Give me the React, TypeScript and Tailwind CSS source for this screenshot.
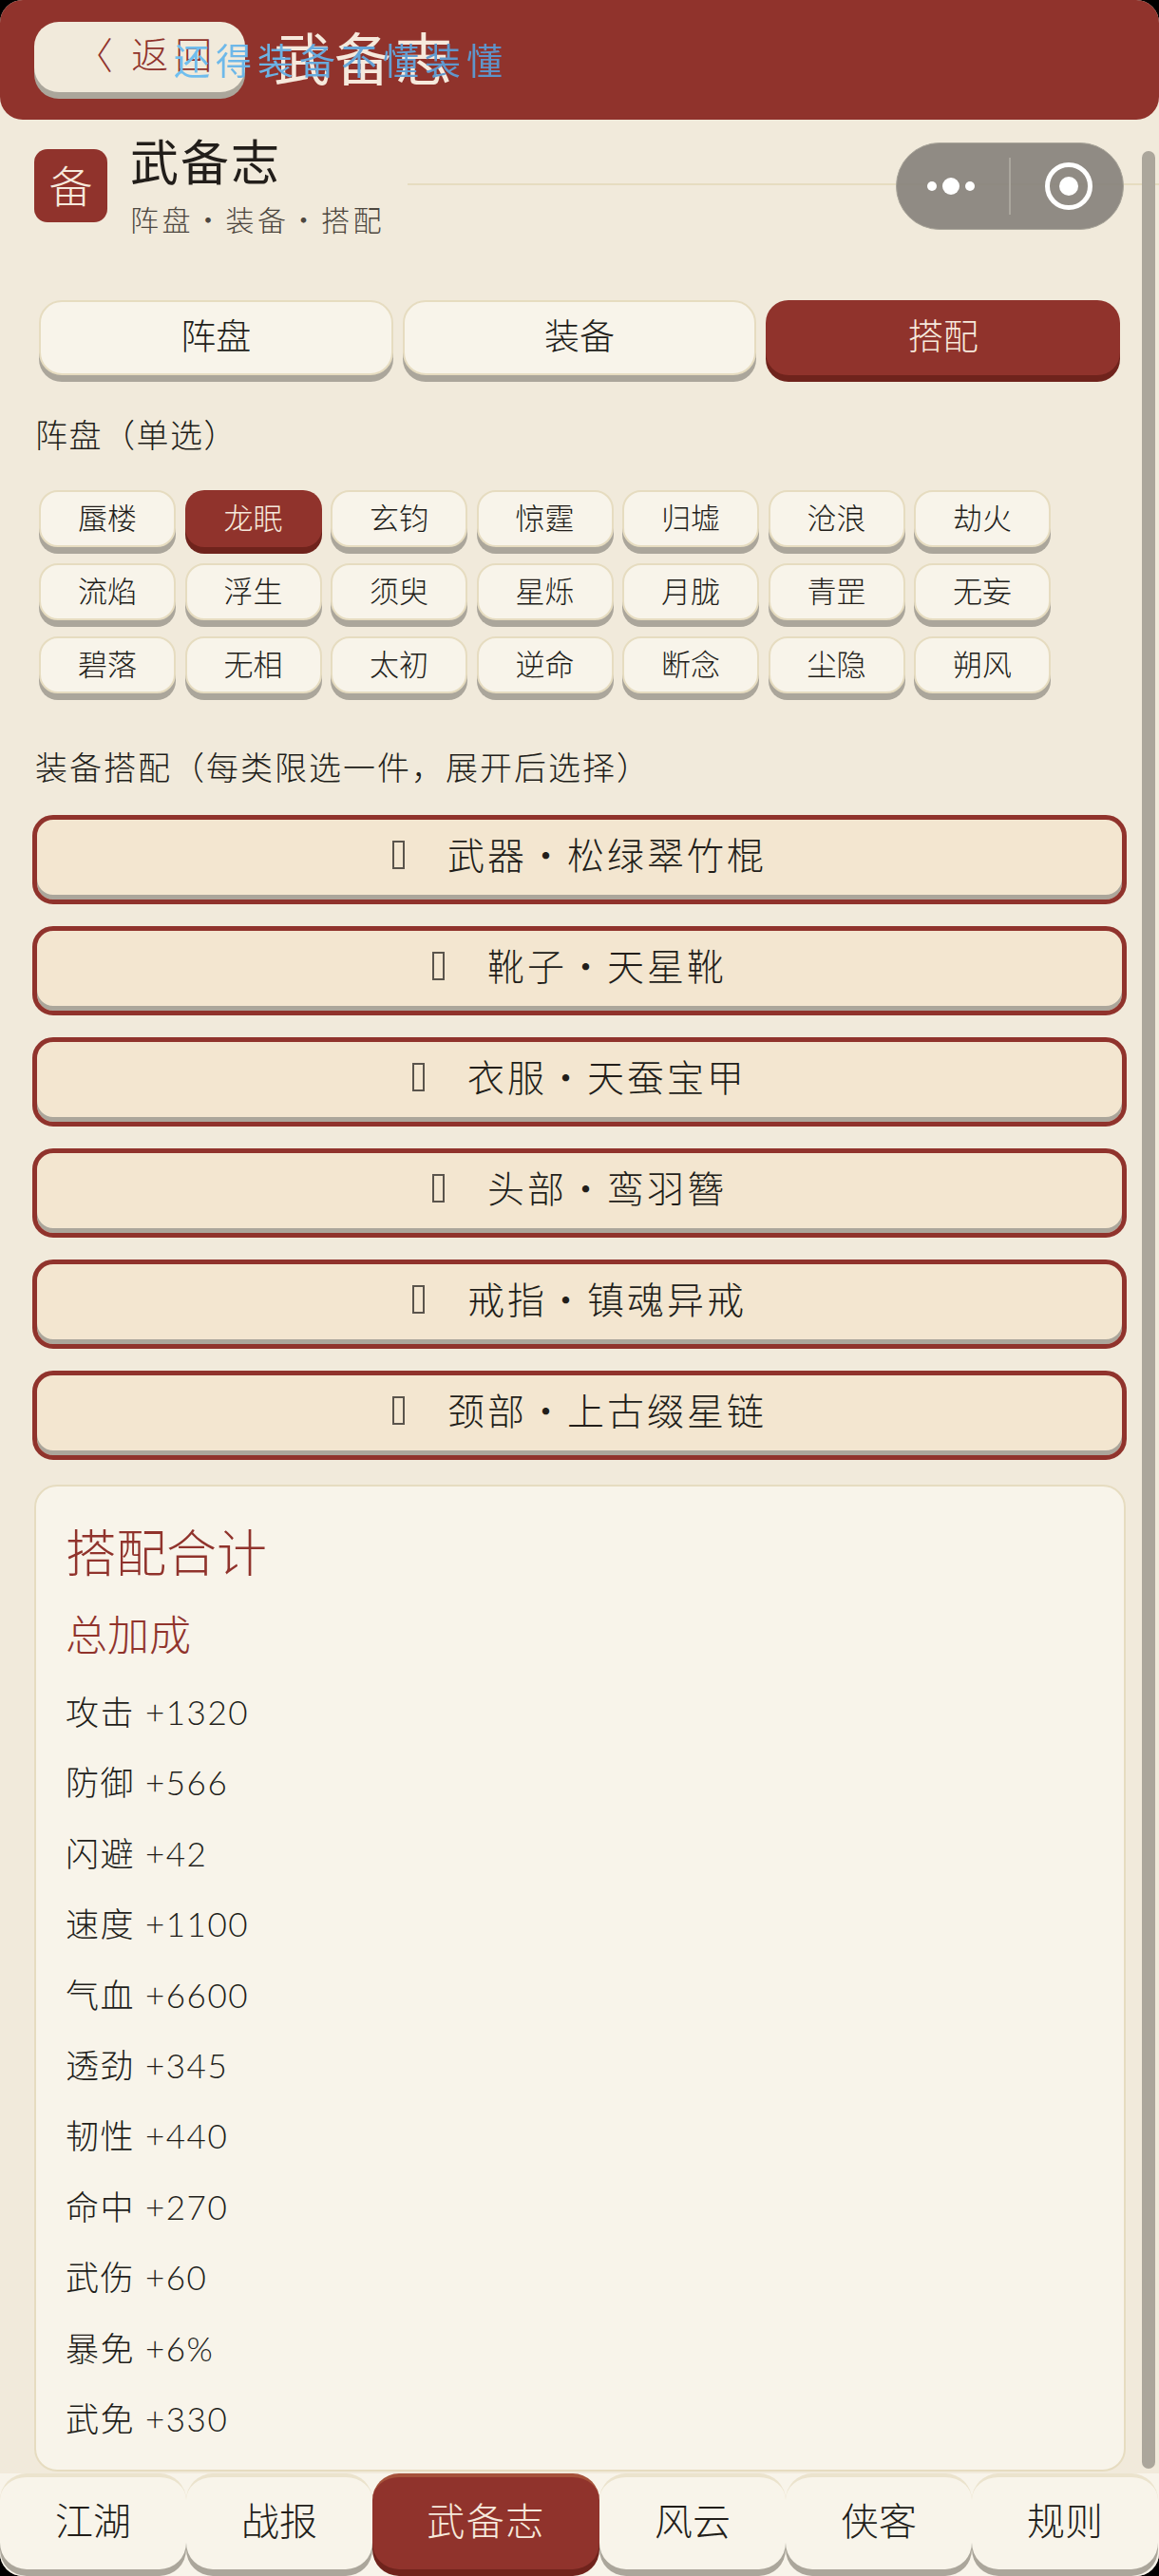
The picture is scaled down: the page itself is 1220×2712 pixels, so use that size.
const chips = [
  ["蜃楼", "龙眠", "玄钧", "惊霆", "归墟", "沧浪", "劫火"],
  ["流焰", "浮生", "须臾", "星烁", "月胧", "青罡", "无妄"],
  ["碧落", "无相", "太初", "逆命", "断念", "尘隐", "朔风"],
];
const gears = ["武器・松绿翠竹棍", "靴子・天星靴", "衣服・天蚕宝甲", "头部・鸾羽簪", "戒指・镇魂异戒", "颈部・上古缀星链"];
const stats = ["攻击 +1320", "防御 +566", "闪避 +42", "速度 +1100", "气血 +6600", "透劲 +345", "韧性 +440", "命中 +270", "武伤 +60", "暴免 +6%", "武免 +330"];
const nav = ["江湖", "战报", "武备志", "风云", "侠客", "规则"];

export default function App() {
  return (
    <div className="relative h-[2712px] w-[1220px] overflow-hidden bg-black font-['Lato','Noto_Sans_CJK_SC',sans-serif] font-light text-[#221e1a]">
      <div className="flex h-full flex-col overflow-hidden rounded-[24px] bg-[#f1eadb]">
        <header className="relative flex h-[126px] shrink-0 items-start rounded-b-[24px] bg-[#90332c] pl-[36px] pt-[23px]">
          <div className="flex h-[74px] w-[222px] items-center justify-center rounded-[26px] bg-[#f1eadb] pb-[6px] pl-[16px] text-[39px] tracking-[7px] text-[#90332c] shadow-[0_7px_0_#aba69b] [word-spacing:-5px]">
            〈 返回
          </div>
          <div className="absolute left-[288px] top-[19px] text-[60px] font-normal leading-[86px] tracking-[4px] text-[#f6e9dc]">武备志</div>
          <div className="absolute left-[183px] top-[35px] bg-gradient-to-r from-[#71c0f0] to-[#5d90c6] bg-clip-text text-[38px] font-normal leading-[56px] tracking-[6px] text-transparent">
            还得装备不懂装懂
          </div>
        </header>

        <div className="relative min-h-0 flex-1 overflow-hidden">
          <div className="relative flex h-[126px] items-start pl-[36px] pt-[31px]">
            <div className="flex h-[77px] w-[77px] items-center justify-center rounded-[14px] bg-[#90332c] text-[46px] text-[#f6e9dc]">备</div>
            <div className="-mt-[17px] ml-[24px]">
              <div className="text-[51px] font-normal leading-[62px] tracking-[2px]">武备志</div>
              <div className="mt-[9px] text-[30px] leading-[40px] tracking-[3.5px] text-[#4d473f]">阵盘・装备・搭配</div>
            </div>
            <div className="ml-[24px] mt-[36px] h-[2px] flex-1 bg-[#e6dcc0]" />
          </div>

          <div className="mt-[64px] flex gap-[10px] pl-[41px] pr-[41px]">
            {["阵盘", "装备", "搭配"].map((t, i) => (
              <div
                key={t}
                className={
                  i === 2
                    ? "flex h-[79px] w-[373px] items-center justify-center rounded-[24px] bg-[#90332c] pb-[4px] text-[37px] text-[#f6e9dc] shadow-[0_7px_0_#6f231c]"
                    : "flex h-[79px] w-[373px] items-center justify-center rounded-[24px] border-2 border-[#e6dcc0] bg-[#f8f4ea] pb-[4px] text-[37px] shadow-[0_7px_0_#aba69b]"
                }
              >
                {t}
              </div>
            ))}
          </div>

          <div className="mt-[39px] pl-[37px] text-[34px] leading-[48px] tracking-[1.5px]">阵盘（单选）</div>

          <div className="mt-[34px] flex flex-col gap-[17px] pl-[41px]">
            {chips.map((row, r) => (
              <div key={r} className="flex gap-[9.5px]">
                {row.map((c) => (
                  <div
                    key={c}
                    className={
                      c === "龙眠"
                        ? "flex h-[60px] w-[144px] items-center justify-center rounded-[20px] bg-[#90332c] pb-[2px] text-[31px] text-[#f6e9dc] shadow-[0_7px_0_#6f231c]"
                        : "flex h-[60px] w-[144px] items-center justify-center rounded-[20px] border-2 border-[#e6dcc0] bg-[#f8f4ea] pb-[2px] text-[31px] shadow-[0_7px_0_#aba69b]"
                    }
                  >
                    {c}
                  </div>
                ))}
              </div>
            ))}
          </div>

          <div className="mt-[54px] pl-[37px] text-[34px] leading-[48px] tracking-[2px]">装备搭配（每类限选一件，展开后选择）</div>

          <div className="mt-[26px] flex flex-col gap-[23px] pl-[34px] pr-[34px]">
            {gears.map((g) => (
              <div
                key={g}
                className="flex h-[94px] items-center justify-center rounded-[22px] border-[5px] border-[#90332c] bg-[#f3e6d0] pb-[10px] text-[39px] tracking-[3px] shadow-[inset_0_-5px_0_#aba69b]"
              >
                <span className="mr-[45px] h-[30px] w-[13px] border-2 border-[#5a544c]" />
                {g}
              </div>
            ))}
          </div>

          <section className="ml-[36px] mt-[26px] h-[1039px] w-[1149px] rounded-[24px] border-2 border-[#e6dcc0] bg-[#f8f4ea] pl-[31px] pt-[32px]">
            <div className="text-[53px] leading-[76px] text-[#90332c]">搭配合计</div>
            <div className="mt-[17px] text-[44px] leading-[62px] text-[#90332c]">总加成</div>
            <div className="mt-[13px] flex flex-col">
              {stats.map((s) => (
                <div key={s} className="h-[74.4px] text-[35px] leading-[74px] tracking-[1.5px]">{s}</div>
              ))}
            </div>
          </section>

          <div className="absolute right-[4px] top-[33px] h-[2440px] w-[14px] rounded-full bg-[#aba69b]" />

          <div className="absolute right-[37px] top-[24px] flex h-[92px] w-[240px] items-center rounded-full border border-[#a9a59a] bg-[#85817a]/90">
            <svg className="ml-[26px]" width="66" height="20" viewBox="0 0 66 20">
              <circle cx="11" cy="10" r="5" fill="#fff" />
              <circle cx="31" cy="10" r="9" fill="#fff" />
              <circle cx="51" cy="10" r="5" fill="#fff" />
            </svg>
            <div className="ml-[26px] h-[60px] w-[2px] bg-[#aaa69d]" />
            <svg className="ml-[36px]" width="50" height="50" viewBox="0 0 50 50">
              <circle cx="25" cy="25" r="22.5" fill="none" stroke="#fff" strokeWidth="5" />
              <circle cx="25" cy="25" r="10" fill="#fff" />
            </svg>
          </div>
        </div>

        <nav className="flex h-[108px] shrink-0 bg-[#f8f4ea]">
          {nav.map((n) => {
            const active = n === "武备志";
            return (
              <div
                key={n}
                className={
                  active
                    ? "flex h-[101px] w-[239px] items-center justify-center rounded-[28px] border-t-[4px] border-[#a5523a] bg-[#90332c] pb-[6px] text-[40px] tracking-[1.5px] text-[#f6e9dc] shadow-[0_7px_0_#6f231c]"
                    : "flex h-[101px] w-[196px] items-center justify-center rounded-[28px] border-t-[4px] border-[#ebe3cd] bg-[#f8f4ea] pb-[6px] text-[40px] shadow-[0_7px_0_#aba69b]"
                }
              >
                {n}
              </div>
            );
          })}
        </nav>
      </div>
    </div>
  );
}
